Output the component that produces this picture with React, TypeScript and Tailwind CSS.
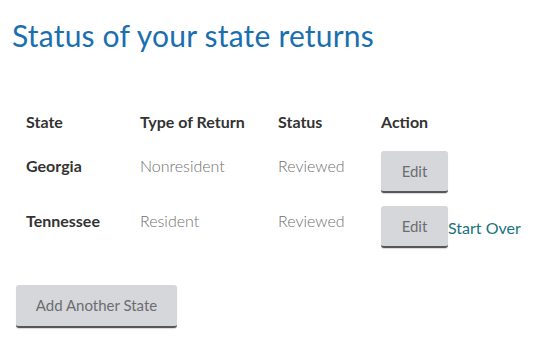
import React from "react";

interface StateRow {
  state: string;
  type: string;
  status: string;
  startOver?: boolean;
}

const rows: StateRow[] = [
  { state: "Georgia", type: "Nonresident", status: "Reviewed" },
  { state: "Tennessee", type: "Resident", status: "Reviewed", startOver: true },
];

const font = { fontFamily: "Lato, 'Open Sans', sans-serif" };

const GrayButton: React.FC<{ label: string; className?: string }> = ({ label, className = "" }) => (
  <button
    className={`bg-[#d5d7db] text-[#6b6d70] rounded-[3px] border-b-2 border-[#55575a] shadow-[0_1px_1px_rgba(0,0,0,0.15)] ${className}`}
  >
    {label}
  </button>
);

export default function App() {
  return (
    <div className="w-[557px] h-[348px] bg-white overflow-hidden" style={font}>
      <h1 className="pl-[12px] pt-[16px] pb-[2px] text-[30px] leading-[38px] tracking-[0.2px] text-[#1a6faf] font-normal">
        Status of your state returns
      </h1>

      <div className="pl-[26px] pt-[55px]">
        <div className="grid grid-cols-[114px_138px_103px_1fr] text-[16px] leading-[22px] font-bold text-[#333]">
          <div>State</div>
          <div>Type of Return</div>
          <div>Status</div>
          <div>Action</div>
        </div>

        <div className="flex flex-col gap-[13px] pt-[18px]">
          {rows.map((r) => (
            <div key={r.state} className="grid grid-cols-[114px_138px_103px_1fr] items-start text-[16px] leading-[22px]">
              <div className="pt-[4px] font-bold text-[#333]">{r.state}</div>
              <div className="pt-[4px] font-light text-[#707070]">{r.type}</div>
              <div className="pt-[4px] font-light text-[#707070]">{r.status}</div>
              <div className="flex items-center">
                <GrayButton label="Edit" className="w-[67px] h-[42px] text-[15px]" />
                {r.startOver && (
                  <span className="text-[16px] text-[#17737c] pt-[2px]">Start Over</span>
                )}
              </div>
            </div>
          ))}
        </div>
      </div>

      <div className="pl-[16px] pt-[37px]">
        <GrayButton label="Add Another State" className="w-[161px] h-[43px] text-[15px]" />
      </div>
    </div>
  );
}
